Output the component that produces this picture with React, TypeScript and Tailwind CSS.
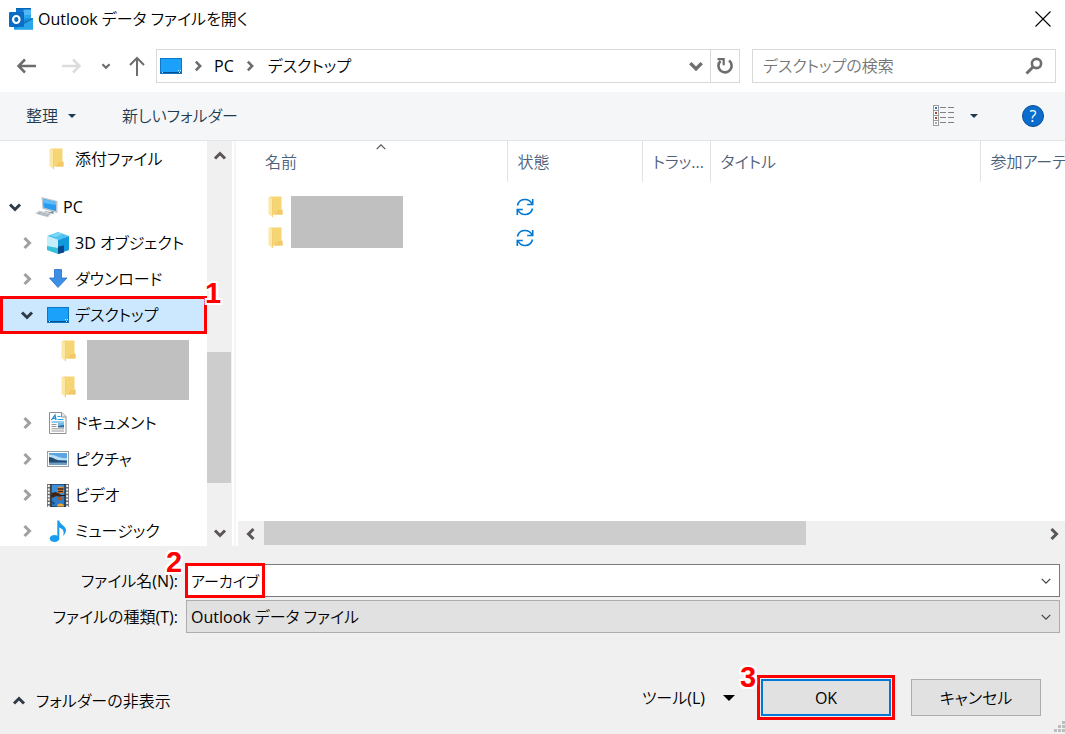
import { useState, type ReactNode } from "react"

type Direction = "up" | "down" | "left" | "right"

const chevronPaths: Record<Direction, string> = {
  up: "M2 9.5 L7 4.5 L12 9.5",
  down: "M2 4.5 L7 9.5 L12 4.5",
  left: "M9.5 2 L4.5 7 L9.5 12",
  right: "M4.5 2 L9.5 7 L4.5 12",
}

function Chevron({
  direction,
  className = "size-3.5",
  weight = 3,
}: {
  direction: Direction
  className?: string
  weight?: number
}) {
  return (
    <svg viewBox="0 0 14 14" className={`shrink-0 ${className}`} fill="none" stroke="currentColor" strokeWidth={weight}>
      <path d={chevronPaths[direction]} />
    </svg>
  )
}

function Caret({ className }: { className: string }) {
  return (
    <svg viewBox="0 0 10 5" className={className} fill="currentColor">
      <path d="M0 0h10L5 5z" />
    </svg>
  )
}

function OutlookIcon() {
  return (
    <svg viewBox="0 0 24 22" className="h-[22px] w-6 shrink-0">
      <path d="M7 0h15v12H7z" fill="#0364b8" />
      <path d="M7 1.5h7.5V11H7z" fill="#0f78d4" />
      <path d="M14.5 1.5H22V11h-7.5z" fill="#50b8f5" />
      <path d="M14.5 7H22v5h-7.5z" fill="#28a8ea" />
      <path d="M5 11l19-1v11.5H5z" fill="#1490df" />
      <path d="M24 10v11.5L13 15z" fill="#1a6fb8" />
      <path d="M5 21.5L24 11v10.5z" fill="#28a8ea" />
      <rect y="4" width="15" height="15" rx="1" fill="#0a6cc4" />
      <ellipse cx="7.3" cy="11.5" rx="3.2" ry="3.5" fill="none" stroke="#fff" strokeWidth="2.2" />
    </svg>
  )
}

function DesktopIcon() {
  return (
    <svg viewBox="0 0 22 16" className="h-4 w-[22px] shrink-0">
      <rect x="0.5" y="0.5" width="21" height="15" fill="#1ba1fa" stroke="#0d78c8" />
      <path d="M1 14.5h20" stroke="#0a4f8c" />
      <path d="M2 14.5h1M19 14.5h1M18 12.5h1M20 12.5h1" stroke="#d7efff" />
    </svg>
  )
}

function FolderIcon() {
  return (
    <svg viewBox="0 0 15 22" className="h-[22px] w-[15px] shrink-0">
      <path d="M2 0.5h11.5V13l1 1v4.5H4z" fill="#f6d575" />
      <path d="M10 14h4.5v4.5H6z" fill="#f2c968" />
      <path d="M0.5 0.5L5 2.5v19L0.5 18z" fill="#fce8a6" />
      <path d="M5 2.5v19l-1-1v-18z" fill="#f3cf72" />
    </svg>
  )
}

function ComputerIcon() {
  return (
    <svg viewBox="0 0 23 22" className="h-[22px] w-[23px] shrink-0">
      <path d="M6.5 1L22.5 5v12L7.5 13z" fill="#b9c5cf" />
      <path d="M8 2.7L21 6v9L8.6 11.6z" fill="#279bf0" />
      <path d="M8 2.7L21 6v3L8.3 7z" fill="#5dbbfa" />
      <path d="M9 15l6 1 3-1 1 3-8-2z" fill="#7d8b96" />
      <path d="M4 14.5l13 3-4 4L0 17.5z" fill="#d5dadd" />
      <path d="M3 16l11 2.7M2 17.3l11 2.7M7 15.5l-3 2.5M11 16.5l-3 3M14.5 17.2l-3 3" stroke="#919ba3" strokeWidth="0.6" />
    </svg>
  )
}

function CubeIcon() {
  return (
    <svg viewBox="0 0 22 22" className="size-[22px] shrink-0">
      <path d="M11 0l11 4-11 4L0 4z" fill="#4fc3f0" />
      <path d="M0 4l11 4v14L0 18z" fill="#c4eef9" />
      <path d="M22 4L11 8v14l11-4z" fill="#1099dc" />
      <path d="M0 14l11 2v6L0 18z" fill="#35c0dc" />
      <path d="M11 14.5l6-1v7L11 22z" fill="#09488d" />
      <path d="M3 3.2L11 0l5 2-7 3z" fill="#7bd5f5" />
    </svg>
  )
}

function DownloadIcon() {
  return (
    <svg viewBox="0 0 22 22" className="size-[22px] shrink-0">
      <path d="M7.5 1.5h7V10H20l-9 9.5L2.5 10h5z" fill="#3b8fe4" stroke="#2a70c8" strokeWidth="0.8" />
    </svg>
  )
}

function DocumentIcon() {
  return (
    <svg viewBox="0 0 22 22" className="size-[22px] shrink-0">
      <path d="M2.5 0.5H15L19 4.5v17H2.5z" fill="#fff" stroke="#8c9094" />
      <path d="M14.5 0.5v4.5H19" fill="#e3e7ea" stroke="#8c9094" />
      <path d="M4.5 8L8 3l1 5M5.8 6.3h3" stroke="#1d8fd6" strokeWidth="1.3" fill="none" />
      <path d="M10.5 4.5h3M10.5 7.5h6M4.5 10h12.5" stroke="#1fa0e0" strokeWidth="1.2" />
      <path d="M4.5 12.5h5M4.5 14.5h5M4.5 16.8h12.5M4.5 19h12.5" stroke="#969696" />
      <rect x="11" y="11.5" width="6" height="4" fill="#2d6a9f" />
      <path d="M11 11.5h6v1.5l-6 1z" fill="#6eb9ec" />
    </svg>
  )
}

function PictureIcon() {
  return (
    <svg viewBox="0 0 22 16" className="h-4 w-[22px] shrink-0">
      <rect x="0.5" y="0.5" width="21" height="15" fill="#fff" stroke="#9a9fa3" />
      <rect x="2" y="2" width="18" height="12" fill="#59a6e2" />
      <path d="M2 4c6-1 10 4 18 3v2H2z" fill="#b8def5" />
      <path d="M2 6c4 0 6 3 11 3.5l7 .5v2H2z" fill="#224b6f" />
      <path d="M2 11.5h18V14H2z" fill="#6f9fc4" />
    </svg>
  )
}

function VideoIcon() {
  return (
    <svg viewBox="0 0 22 23" className="h-[23px] w-[22px] shrink-0">
      <rect width="22" height="23" fill="#6d6d6d" />
      <rect x="3.5" width="15" height="23" fill="#161616" />
      <rect x="4.5" y="0.5" width="13" height="10.5" fill="#3d8fdc" />
      <rect x="4.5" y="12" width="13" height="10.5" fill="#2f7cc9" />
      <path d="M1.8 1v22M20.2 1v22" stroke="#f5f5f5" strokeWidth="2" strokeDasharray="2 1.4" />
      <ellipse cx="13.5" cy="6" rx="3.5" ry="3.5" fill="#e18b2e" />
      <path d="M10.5 5h6M11 7.5h5" stroke="#3f2316" strokeWidth="1.3" />
      <path d="M4.5 9l4-1 5 2v3l-4-1-5 2z" fill="#3e2417" />
      <path d="M10 13.5c2-1 4-1 6 0l-2 3h-2z" fill="#a8592b" />
      <path d="M10 22.5c0-4 7-4 7 0z" fill="#edaa35" />
      <path d="M5 17l3 2-2 2z" fill="#153e70" />
    </svg>
  )
}

function MusicIcon() {
  return (
    <svg viewBox="0 0 22 23" className="h-[23px] w-[22px] shrink-0">
      <ellipse cx="7.5" cy="18.5" rx="4.8" ry="3.6" fill="#1a9cf0" />
      <path d="M10.3 0.5h2c.3 4 6.7 5.5 6.7 9.5 0 2.5-1.5 4.5-3 6 1.5-4 .5-7-3.7-8.5V18.5h-2z" fill="#1a9cf0" />
    </svg>
  )
}

function SyncIcon() {
  return (
    <svg viewBox="0 0 18 18" className="size-[18px]" fill="none" stroke="#0078d4" strokeWidth="1.6">
      <path d="M1.5 7.5C3 0 13 -0.5 16 6" />
      <path d="M16.7 1v5.5h-5.5" />
      <path d="M16.5 10.5C15 18 5 18.5 2 12" />
      <path d="M1.3 17v-5.5h5.5" />
    </svg>
  )
}

function DetailsViewIcon() {
  return (
    <svg viewBox="0 0 22 22" className="size-[22px]" shapeRendering="crispEdges">
      <path d="M0.5 0.5h5v20h-5zM0.5 5.5h5M0.5 10.5h5M0.5 15.5h5" fill="#fff" stroke="#989ca0" />
      <path d="M2 3h2" stroke="#2777b8" strokeWidth="2" />
      <path d="M2 8h2M2 13h2" stroke="#a34d24" strokeWidth="2" />
      <path d="M2 18h2" stroke="#a7a7a7" strokeWidth="2" />
      <path d="M7 2.5h6M15 2.5h6M7 7.5h6M15 7.5h6M7 12.5h6M15 12.5h6M7 17.5h6M15 17.5h6" stroke="#7d8286" />
    </svg>
  )
}

function Step({ n, className }: { n: number; className: string }) {
  return (
    <span
      className={`pointer-events-none absolute z-20 font-['Liberation_Sans',sans-serif] text-[29px] leading-7 font-bold text-[#f00] [text-shadow:2px_0_#fff,-2px_0_#fff,0_2px_#fff,0_-2px_#fff,2px_2px_#fff,-2px_-2px_#fff,2px_-2px_#fff,-2px_2px_#fff] ${className}`}
    >
      {n}
    </span>
  )
}

function TreeItem({
  label,
  icon,
  expanded,
  indent = "pl-5",
  selected,
}: {
  label: string
  icon: ReactNode
  expanded?: boolean
  indent?: string
  selected?: boolean
}) {
  return (
    <li className={`relative ${selected ? "bg-[#cce8ff]" : ""}`}>
      <button className={`flex h-9 w-full items-center ${indent}`}>
        <span className={`flex w-[27px] ${expanded ? "text-[#303b47]" : "text-[#a0a0a0]"}`}>
          <Chevron direction={expanded ? "down" : "right"} />
        </span>
        <span className="flex w-7">{icon}</span>
        {label}
      </button>
      {selected && <span className="pointer-events-none absolute inset-x-0 -inset-y-px z-10 border-3 border-[#f00]" />}
    </li>
  )
}

const columns = ["状態", "トラッ...", "タイトル", "参加アーテ"]

export default function App() {
  const [fileName, setFileName] = useState("アーカイブ")

  return (
    <div className="flex h-screen flex-col overflow-hidden bg-white font-['Open_Sans','Noto_Sans_CJK_JP_DemiLight','Noto_Sans_CJK_JP',sans-serif] text-base leading-6 text-black [font-feature-settings:'palt']">
      {/* Title bar */}
      <header className="flex h-9 shrink-0 items-center pt-0.5 pr-3 pl-[9px]">
        <OutlookIcon />
        <h1 className="ml-[5px]">Outlook データ ファイルを開く</h1>
        <button aria-label="閉じる" className="ml-auto flex size-5 items-center justify-center">
          <svg viewBox="0 0 16 16" className="size-4" stroke="#000" strokeWidth="1.1">
            <path d="M0.5 0.5l15 15M15.5 0.5l-15 15" />
          </svg>
        </button>
      </header>

      {/* Navigation */}
      <nav className="flex h-14 shrink-0 items-center pt-1 pr-[9px] pl-4">
        <button aria-label="戻る" className="text-[#6d6d6d]">
          <svg viewBox="0 0 20 16" className="h-4 w-5" fill="none" stroke="currentColor" strokeWidth="2.5">
            <path d="M20 8H2.5M9 1.5L2.5 8l6.5 6.5" />
          </svg>
        </button>
        <button aria-label="進む" className="ml-[26px] text-[#dcdcdc]">
          <svg viewBox="0 0 20 16" className="h-4 w-5" fill="none" stroke="currentColor" strokeWidth="2.5">
            <path d="M0 8h17.5M11 1.5L17.5 8 11 14.5" />
          </svg>
        </button>
        <button aria-label="最近の場所" className="ml-[19px] text-[#6d6d6d]">
          <Chevron direction="down" className="size-2.5" />
        </button>
        <button aria-label="上へ" className="ml-[18px] text-[#6d6d6d]">
          <svg viewBox="0 0 16 20" className="h-5 w-4" fill="none" stroke="currentColor" strokeWidth="2">
            <path d="M8 20V2M1 9l7-7 7 7" />
          </svg>
        </button>
        <div className="ml-[11px] flex h-[34px] min-w-0 flex-1 items-center border border-[#d9d9d9] pl-[3px]">
          <DesktopIcon />
          <span className="ml-2.5 flex text-[#6d6d6d]">
            <Chevron direction="right" className="size-3" />
          </span>
          <a href="#pc" className="ml-2.5">PC</a>
          <span className="ml-2.5 flex text-[#6d6d6d]">
            <Chevron direction="right" className="size-3" />
          </span>
          <a href="#desktop" className="ml-3">デスクトップ</a>
          <button aria-label="履歴" className="mr-1.5 ml-auto text-[#6d6d6d]">
            <Chevron direction="down" className="size-4" />
          </button>
          <button aria-label="更新" className="flex h-full w-[29px] items-center justify-center border-l border-[#d9d9d9] text-[#6d6d6d]">
            <svg viewBox="0 0 18 18" className="size-[18px]" fill="none" stroke="currentColor" strokeWidth="2.6">
              <path d="M13 3.5A6.6 6.6 0 1 1 4.5 4" />
              <path d="M1.5 2.2h6.2v6" strokeWidth="2.2" />
            </svg>
          </button>
        </div>
        <label className="ml-3 flex h-[34px] w-[304px] items-center border border-[#d9d9d9] pr-3 pl-2.5">
          <input
            type="search"
            aria-label="デスクトップの検索"
            placeholder="デスクトップの検索"
            className="min-w-0 flex-1 outline-none placeholder:text-[#757575]"
          />
          <svg viewBox="0 0 18 18" className="size-[18px]" fill="none" stroke="#6d6d6d">
            <circle cx="11.5" cy="6.5" r="4.6" strokeWidth="2.6" />
            <path d="M8.5 9.5L1.5 16.5" strokeWidth="3" />
          </svg>
        </label>
      </nav>

      {/* Toolbar */}
      <div className="flex h-[49px] shrink-0 items-center border-b border-[#e5e5e5] bg-[#f5f6f7] pr-[21px] pl-[26px] text-[#1e3a50]">
        <button className="flex items-center gap-2.5">
          整理
          <Caret className="h-1 w-2" />
        </button>
        <button className="ml-[46px]">新しいフォルダー</button>
        <button aria-label="表示方法の変更" className="ml-auto flex items-center gap-[15px]">
          <DetailsViewIcon />
          <Caret className="h-1 w-2" />
        </button>
        <button
          aria-label="ヘルプ"
          className="ml-11 flex size-[22px] items-center justify-center rounded-full border border-[#0a4d97] bg-[#0a6ccd] font-medium text-white"
        >
          ?
        </button>
      </div>

      <main className="flex min-h-0 flex-1">
        {/* Folder tree */}
        <div className="relative flex w-[232px] shrink-0">
          <ul className="min-w-0 flex-1">
            <li className="mb-3">
              <button className="flex h-9 w-full items-center pl-[49px]">
                <span className="flex w-6.5">
                  <FolderIcon />
                </span>
                添付ファイル
              </button>
            </li>
            <TreeItem label="PC" icon={<ComputerIcon />} expanded indent="pl-2" />
            <TreeItem label="3D オブジェクト" icon={<CubeIcon />} />
            <TreeItem label="ダウンロード" icon={<DownloadIcon />} />
            <TreeItem label="デスクトップ" icon={<DesktopIcon />} expanded selected />
            <li className="flex h-[72px] pl-[61px]">
              <div className="flex w-6.5 flex-col gap-3.5 pt-[7px]">
                <FolderIcon />
                <FolderIcon />
              </div>
              <div className="mt-[7px] h-15 w-[102px] bg-[#c0c0c0]" />
            </li>
            <TreeItem label="ドキュメント" icon={<DocumentIcon />} />
            <TreeItem label="ピクチャ" icon={<PictureIcon />} />
            <TreeItem label="ビデオ" icon={<VideoIcon />} />
            <TreeItem label="ミュージック" icon={<MusicIcon />} />
          </ul>
          <div className="flex w-[25px] flex-col items-center bg-[#f0f0f0] text-[#5b5459]">
            <button aria-label="上にスクロール" className="flex h-[30px] items-center">
              <Chevron direction="up" />
            </button>
            <div className="flex w-full flex-1 flex-col">
              <div className="grow-[181]" />
              <div className="w-6 grow-[131] bg-[#cdcdcd]" />
              <div className="grow-[37]" />
            </div>
            <button aria-label="下にスクロール" className="flex h-[26px] items-center">
              <Chevron direction="down" />
            </button>
          </div>
          <Step n={1} className="top-[138px] left-[205px]" />
        </div>

        {/* File list */}
        <div className="ml-0.5 flex min-w-0 flex-1 flex-col border-l-2 border-[#f5f5f5]">
          <div className="min-h-0 flex-1 overflow-hidden">
            <table className="w-full table-fixed">
              <colgroup>
                <col className="w-[55px]" />
                <col className="w-[216px]" />
                <col className="w-[135px]" />
                <col className="w-[68px]" />
                <col className="w-[270px]" />
                <col />
              </colgroup>
              <thead>
                <tr className="h-[41px] text-left text-[#4c607a]">
                  <th colSpan={2} className="relative border-r border-[#e2e2e2] pl-[29px] font-normal">
                    名前
                    <span className="absolute top-0 left-[139px] text-[#5b5459]">
                      <Chevron direction="up" weight={1.5} className="size-3" />
                    </span>
                  </th>
                  {columns.map((column) => (
                    <th
                      key={column}
                      className="overflow-hidden border-r border-[#e2e2e2] pl-2.5 font-normal whitespace-nowrap last:border-r-0"
                    >
                      {column}
                    </th>
                  ))}
                </tr>
              </thead>
              <tbody>
                <tr className="h-[9px]" />
                <tr className="h-[31px]">
                  <td className="pl-8">
                    <FolderIcon />
                  </td>
                  <td rowSpan={2}>
                    <div className="h-[52px] w-28 bg-[#c0c0c0]" />
                  </td>
                  <td className="pl-[9px]">
                    <SyncIcon />
                  </td>
                </tr>
                <tr className="h-[31px]">
                  <td className="pl-8">
                    <FolderIcon />
                  </td>
                  <td className="pl-[9px]">
                    <SyncIcon />
                  </td>
                </tr>
              </tbody>
            </table>
          </div>
          <div className="ml-0.5 flex h-[25px] shrink-0 bg-[#f0f0f0] text-[#5b5459]">
            <button aria-label="左にスクロール" className="flex w-[26px] items-center justify-center">
              <Chevron direction="left" />
            </button>
            <div className="flex flex-1">
              <div className="h-6 grow-[542] bg-[#cdcdcd]" />
              <div className="grow-[237]" />
            </div>
            <button aria-label="右にスクロール" className="flex w-[22px] items-center justify-center">
              <Chevron direction="right" />
            </button>
          </div>
        </div>
      </main>

      {/* File name and actions */}
      <footer className="relative flex shrink-0 flex-col bg-[#f0f0f0] pt-[18px] pr-[5px] pb-[18px]">
        <div className="grid grid-cols-[178px_1fr] gap-x-2 gap-y-[3px]">
          <label htmlFor="file-name" className="self-center text-right">
            ファイル名(N):
          </label>
          <div className="relative flex h-[33px] items-center border border-[#7a7a7a] bg-white pr-[7px] pl-1">
            <input
              id="file-name"
              value={fileName}
              onChange={(e) => setFileName(e.target.value)}
              className="min-w-0 flex-1 text-[15px] outline-none"
            />
            <button aria-label="候補を表示" className="text-[#444]">
              <Chevron direction="down" weight={1.5} className="size-3" />
            </button>
            <span className="pointer-events-none absolute -top-0.5 -left-0.5 h-[35px] w-20 border-3 border-[#f00]" />
            <Step n={2} className="-top-[17px] -left-[21px]" />
          </div>
          <label htmlFor="file-type" className="self-center text-right">
            ファイルの種類(T):
          </label>
          <div className="relative flex h-[33px] items-center border border-[#adadad] bg-[#e1e1e1]">
            <select id="file-type" className="h-full w-full appearance-none pl-1 outline-none">
              <option>Outlook データ ファイル</option>
            </select>
            <span className="pointer-events-none absolute right-[7px] text-[#444]">
              <Chevron direction="down" weight={1.5} className="size-3" />
            </span>
          </div>
        </div>

        <div className="mt-[46px] flex h-[37px] items-center pr-[19px] pl-3">
          <button className="flex items-center gap-2.5 pt-1.5">
            <span className="flex text-[#303b47]">
              <Chevron direction="up" />
            </span>
            フォルダーの非表示
          </button>
          <button className="mr-[26px] ml-auto flex items-center gap-[18px]">
            ツール(L)
            <Caret className="h-1.5 w-3" />
          </button>
          <div className="relative h-full">
            <button className="h-full w-[130px] border-2 border-[#0078d7] bg-[#e1e1e1] outline-3 outline-offset-1 outline-[#f00]">
              OK
            </button>
            <Step n={3} className="-top-4 -left-[21px]" />
          </div>
          <button className="ml-5 h-full w-[130px] border border-[#adadad] bg-[#e1e1e1]">キャンセル</button>
        </div>
        <svg viewBox="0 0 11 11" className="absolute right-0 bottom-0.5 size-[11px]" fill="#bdbdbd">
          <path d="M8 0h3v3H8zM4 4h3v3H4zM8 4h3v3H8zM0 8h3v3H0zM4 8h3v3H4zM8 8h3v3H8z" />
        </svg>
      </footer>
    </div>
  )
}
